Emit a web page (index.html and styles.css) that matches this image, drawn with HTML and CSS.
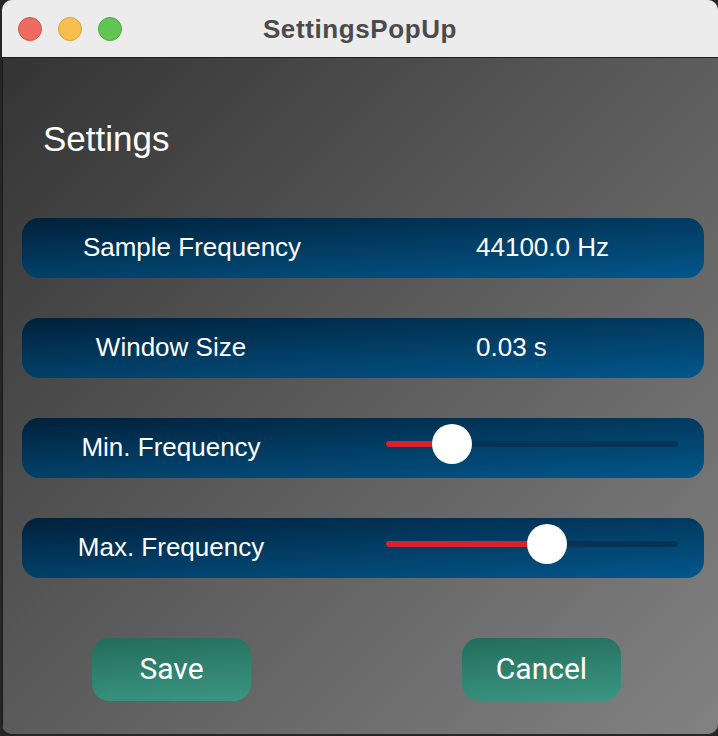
FILE: index.html
```html
<!DOCTYPE html>
<html>
<head>
<meta charset="utf-8">
<link rel="stylesheet" href="styles.css">
</head>
<body>
<div class="window">
  <div class="titlebar">
    <div class="lights">
      <span class="light red"></span>
      <span class="light yellow"></span>
      <span class="light green"></span>
    </div>
    <div class="title">SettingsPopUp</div>
  </div>
  <div class="content">
    <h1 class="heading">Settings</h1>
    <div class="rows">
      <div class="row">
        <div class="label wide">Sample Frequency</div>
        <div class="value">44100.0 Hz</div>
      </div>
      <div class="row">
        <div class="label">Window Size</div>
        <div class="value">0.03 s</div>
      </div>
      <div class="row slider-row">
        <div class="label">Min. Frequency</div>
        <div class="slider">
          <div class="fill" style="width:66px"></div>
          <div class="knob" style="left:46px"></div>
        </div>
      </div>
      <div class="row slider-row">
        <div class="label">Max. Frequency</div>
        <div class="slider">
          <div class="fill" style="width:161px"></div>
          <div class="knob" style="left:141px"></div>
        </div>
      </div>
    </div>
    <div class="buttons">
      <button class="btn">Save</button>
      <button class="btn">Cancel</button>
    </div>
  </div>
</div>
</body>
</html>
```

FILE: styles.css
```css
html, body {
  margin: 0;
  padding: 0;
  background: #262626;
  width: 718px;
  height: 736px;
  overflow: hidden;
}
body {
  font-family: "Liberation Sans", Arial, sans-serif;
}
.window {
  margin-left: 2px;
  width: 716px;
  height: 734px;
  border-radius: 10px;
  overflow: hidden;
  display: flex;
  flex-direction: column;
  background: #555;
}
.titlebar {
  height: 57px;
  flex: none;
  background: #ececec;
  border-bottom: 1px solid #1c1c1c;
  display: flex;
  align-items: center;
  position: relative;
}
.lights {
  display: flex;
  gap: 16px;
  padding-left: 16px;
}
.light {
  width: 24px;
  height: 24px;
  border-radius: 50%;
  box-sizing: border-box;
}
.red { background: #ef6b5f; border: 1px solid #d5544a; }
.yellow { background: #f6bf4f; border: 1px solid #d9a23a; }
.green { background: #61c554; border: 1px solid #4ead42; }
.title {
  position: absolute;
  left: 0;
  right: 0;
  top: 0;
  bottom: 0;
  display: flex;
  align-items: center;
  justify-content: center;
  font-weight: bold;
  font-size: 26px;
  letter-spacing: 0.6px;
  color: #4b4b4b;
  padding-top: 1px;
  pointer-events: none;
}
.content {
  flex: 1;
  border-left: 1px solid #1a1a1a;
  background: linear-gradient(135deg, #343434 0%, #5c5c5c 50%, #828282 100%);
  padding: 61px 0 0 19px;
  box-sizing: border-box;
}
.heading {
  margin: 0 0 59px 21px;
  font-weight: normal;
  font-size: 35px;
  line-height: 40px;
  color: #ffffff;
}
.rows {
  display: flex;
  flex-direction: column;
  gap: 40px;
}
.row {
  width: 682px;
  height: 60px;
  border-radius: 17px;
  background: linear-gradient(176deg, #01203a 0%, #023d64 50%, #02578c 100%);
  display: flex;
  align-items: center;
  color: #ffffff;
  font-size: 26px;
  padding-bottom: 1px;
  box-sizing: border-box;
}
.label {
  width: 298px;
  text-align: center;
}
.label.wide {
  width: 340px;
}
.value {
  margin-left: 156px;
}
.label.wide + .value {
  margin-left: 114px;
}
.slider {
  position: relative;
  margin-left: 66px;
  width: 292px;
  height: 6px;
  border-radius: 3px;
  background: #063356;
  margin-bottom: 7px;
}
.fill {
  height: 6px;
  border-radius: 3px;
  background: #d8222b;
}
.knob {
  position: absolute;
  top: -17px;
  width: 40px;
  height: 40px;
  border-radius: 50%;
  background: #ffffff;
}
.buttons {
  display: flex;
  gap: 211px;
  padding-left: 70px;
  margin-top: 60px;
}
.btn {
  width: 159px;
  height: 63px;
  border: none;
  border-radius: 17px;
  background: linear-gradient(175deg, #246b5a 0%, #2f8270 50%, #3a9682 100%);
  color: #ffffff;
  font-family: Roboto, "Liberation Sans", sans-serif;
  font-size: 30px;
  padding: 0 0 2px 0;
}
```
